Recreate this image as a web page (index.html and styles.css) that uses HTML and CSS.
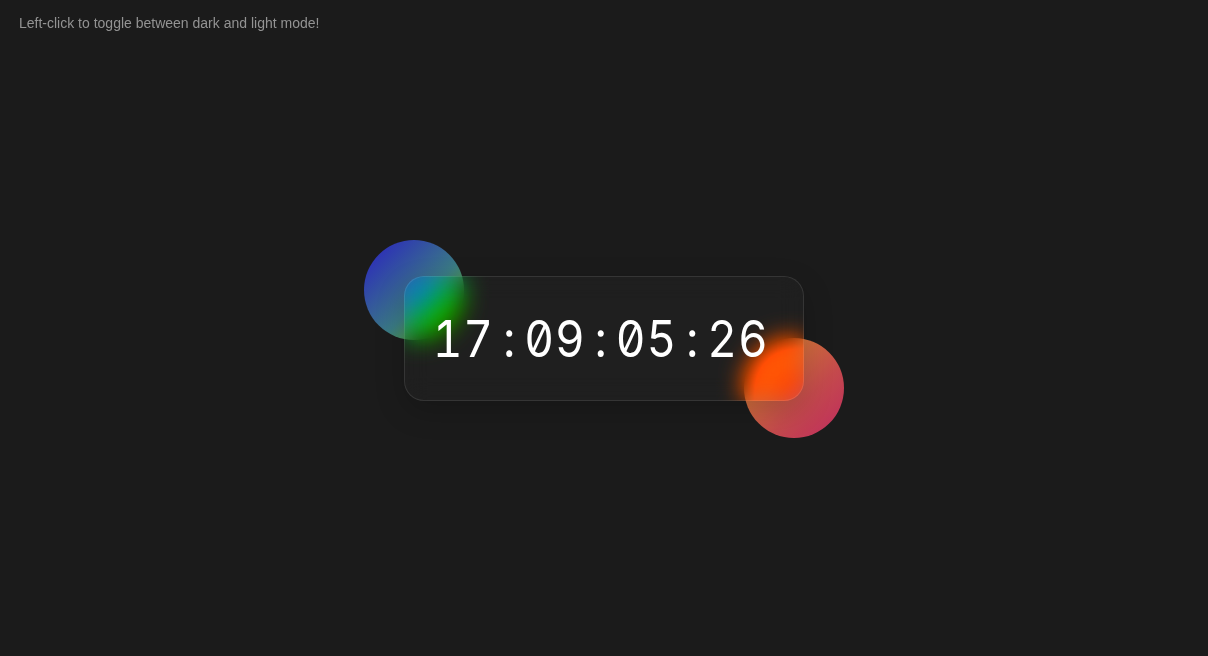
FILE: index.html
```html
<!DOCTYPE html>
<html lang="en">
<head>
<meta charset="utf-8">
<title>Glass Clock</title>
<link rel="stylesheet" href="styles.css">
</head>
<body>
  <p class="hint">Left-click to toggle between dark and light mode!</p>
  <main class="stage">
    <div class="clock-wrap">
      <span class="blob blob-blue"></span>
      <span class="blob blob-red"></span>
      <div class="card">
        <span class="time">17<span class="sep">:</span>09<span class="sep">:</span>05<span class="sep">:</span>26</span>
      </div>
    </div>
  </main>
</body>
</html>
```

FILE: styles.css
```css
html, body {
  margin: 0;
  height: 100%;
}
body {
  background: #1b1b1b;
  display: flex;
  flex-direction: column;
  font-family: "Liberation Sans", Arial, sans-serif;
  overflow: hidden;
}
.hint {
  margin: 0;
  height: 21px;
  box-sizing: border-box;
  padding: 15px 19px 0;
  font-size: 14px;
  line-height: 16px;
  color: #939393;
  white-space: nowrap;
}
.stage {
  flex: 1;
  display: flex;
  align-items: center;
  justify-content: center;
}
.clock-wrap {
  position: relative;
  width: 400px;
  height: 125px;
}
.blob {
  position: absolute;
  width: 100px;
  height: 100px;
  border-radius: 50%;
}
.blob-blue {
  left: -40px;
  top: -36px;
  background: linear-gradient(135deg, #2a1ec4 0%, #3a7a84 58%, #54a032 80%, #54a032 100%);
}
.blob-red {
  right: -40px;
  bottom: -37px;
  background: linear-gradient(135deg, #c86238 0%, #d0703a 30%, #c44a4c 62%, #bf2a60 100%);
}
.card {
  position: relative;
  box-sizing: border-box;
  height: 100%;
  display: flex;
  align-items: center;
  justify-content: center;
  border-radius: 20px;
  border: 1px solid rgba(255, 255, 255, 0.1);
  background: rgba(255, 255, 255, 0.02);
  backdrop-filter: blur(12px) saturate(230%);
  box-shadow: 0 10px 30px rgba(0, 0, 0, 0.18);
}
.time {
  display: flex;
  font-family: Inter, "DejaVu Sans", sans-serif;
  font-feature-settings: "tnum", "zero";
  font-size: 51px;
  letter-spacing: 1px;
  line-height: 1;
  color: #fff;
  transform: scaleX(0.9);
  margin-left: -4px;
  margin-right: 3px;
}
.sep {
  display: inline-block;
  width: 33.6px;
  text-align: center;
  letter-spacing: 0;
}
```
